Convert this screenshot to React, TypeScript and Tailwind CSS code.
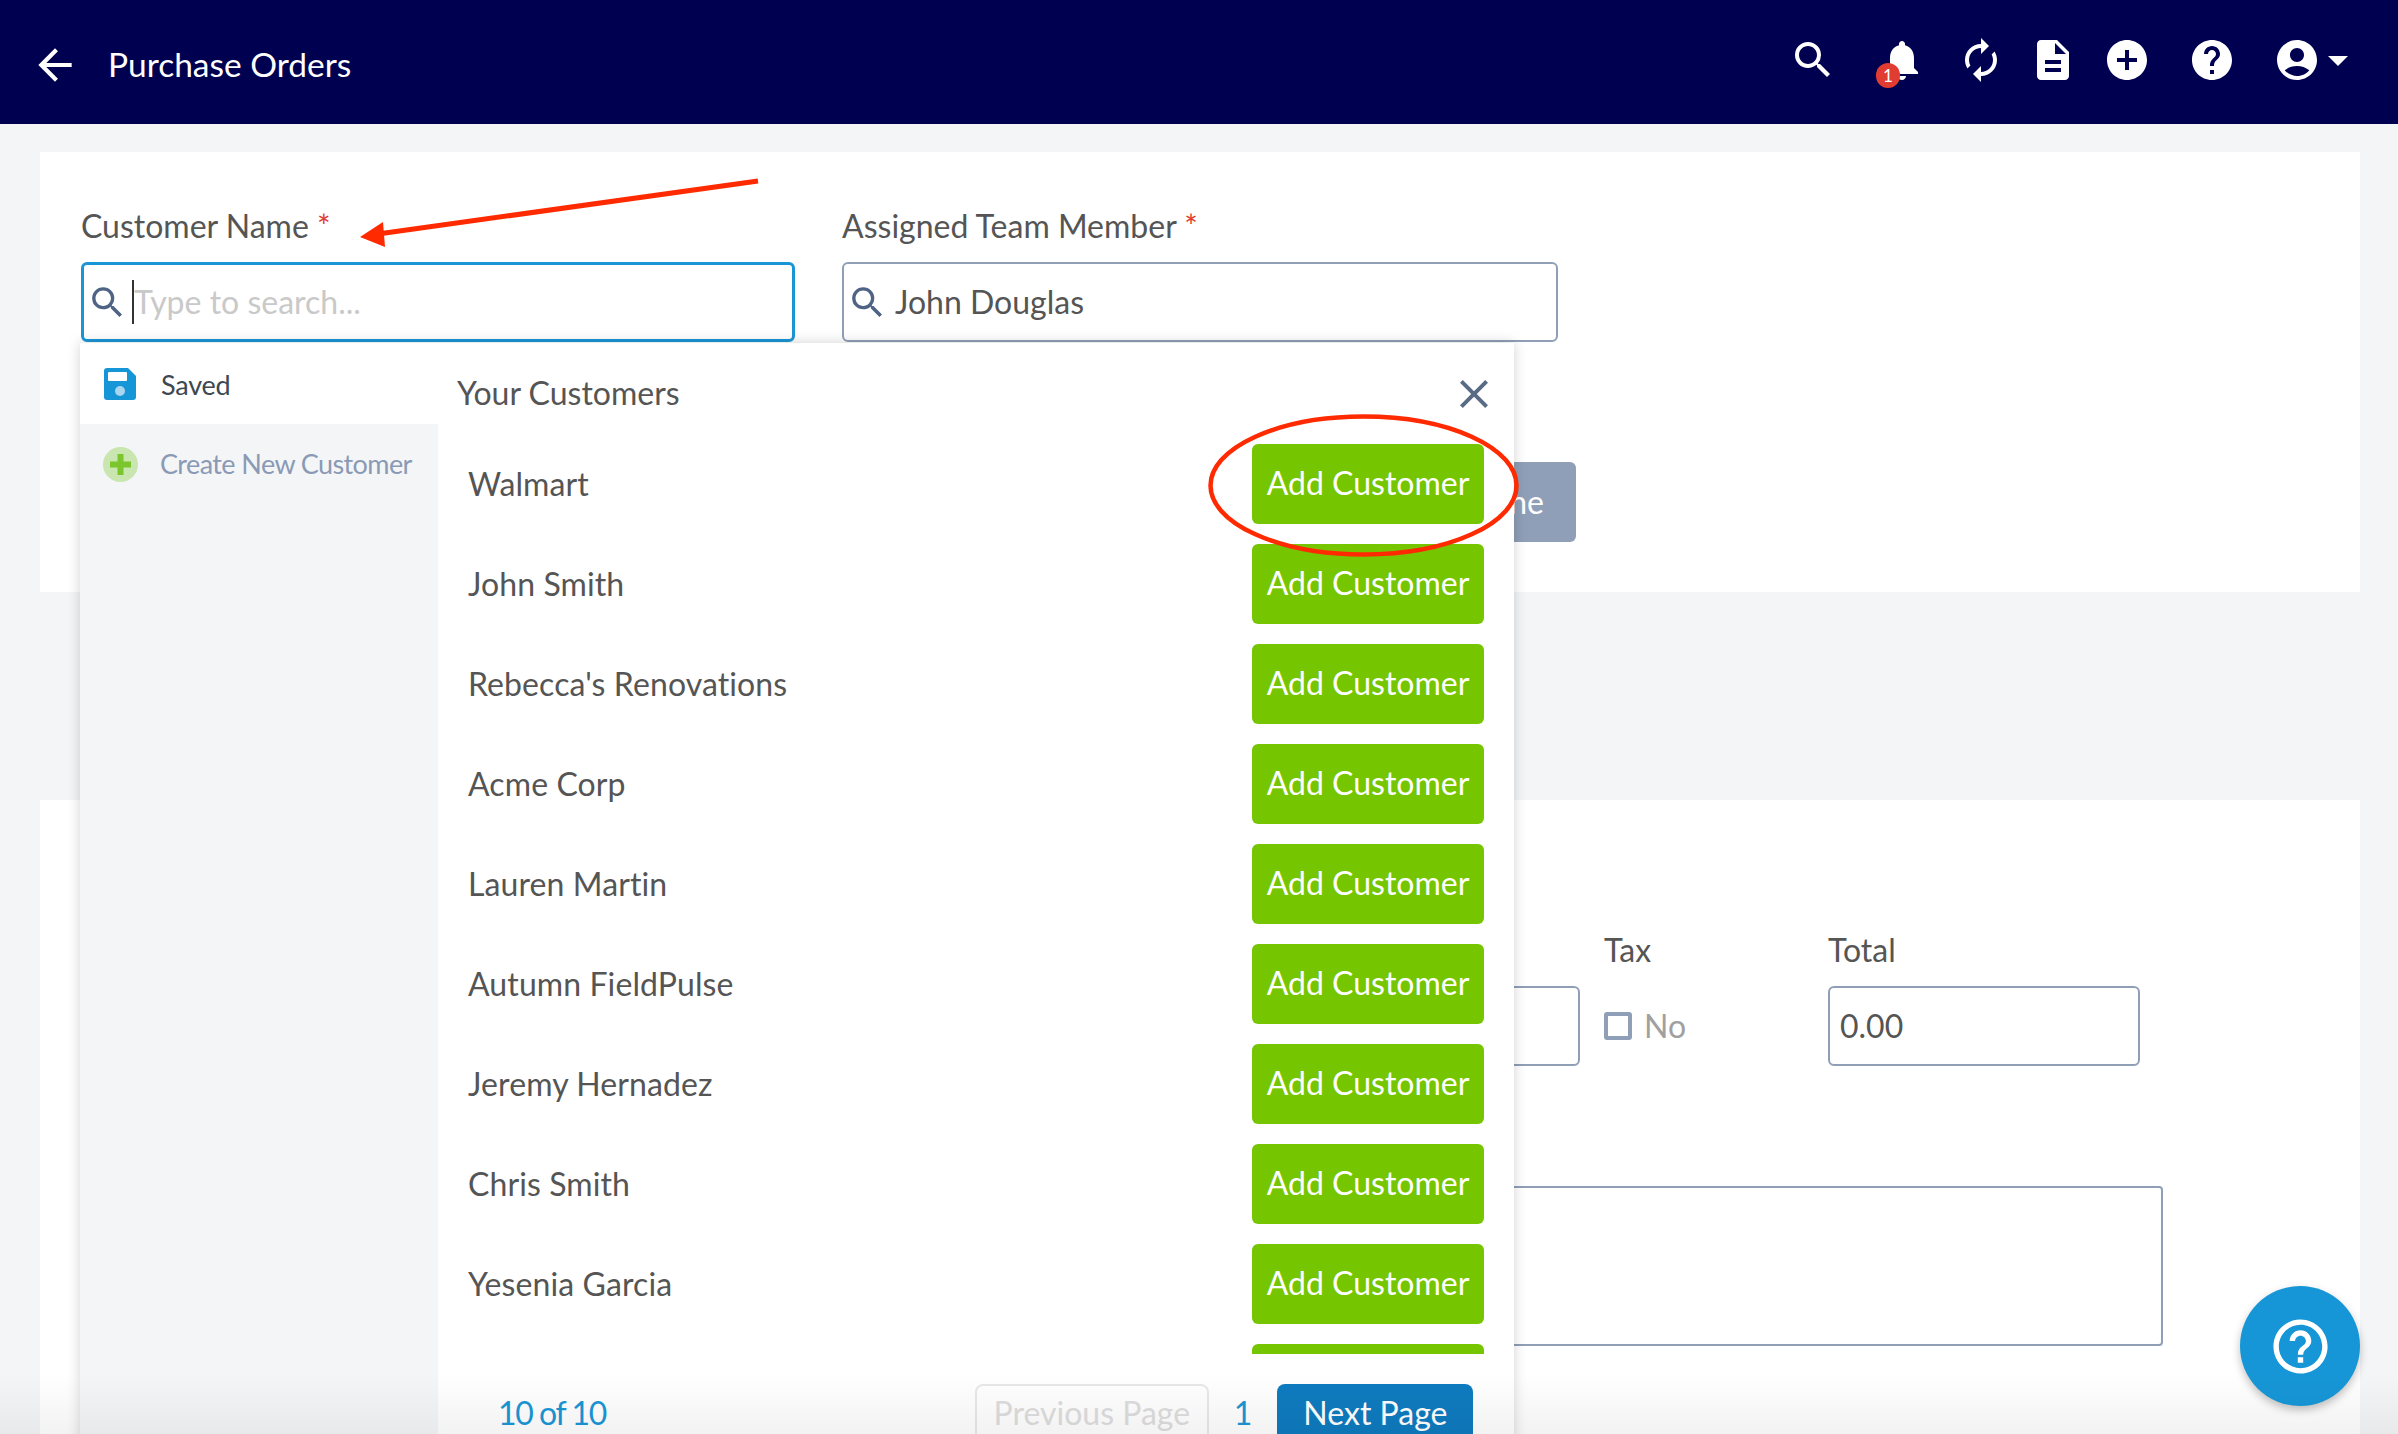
import {
  MdAccountCircle,
  MdAddCircle,
  MdArrowBack,
  MdArrowDropDown,
  MdAutorenew,
  MdClose,
  MdDescription,
  MdHelp,
  MdHelpOutline,
  MdNotifications,
  MdSearch,
} from "react-icons/md";

const customers = [
  "Walmart",
  "John Smith",
  "Rebecca's Renovations",
  "Acme Corp",
  "Lauren Martin",
  "Autumn FieldPulse",
  "Jeremy Hernadez",
  "Chris Smith",
  "Yesenia Garcia",
];

function Header() {
  return (
    <header className="h-[124px] shrink-0 bg-[#000050] text-white flex items-center pl-[30px]">
      <MdArrowBack size={50} className="mt-[6px]" />
      <h1 className="ml-[28px] mt-[6px] text-[33.5px] leading-none">Purchase Orders</h1>
      <div className="ml-auto flex items-center h-full pb-[5px] pr-[36px]">
        <MdSearch size={48} />
        <div className="relative ml-[41px]">
          <MdNotifications size={48} />
          <span className="absolute left-[-2px] top-[27px] w-[24px] h-[25px] rounded-full bg-[#e03c31] text-[17px] leading-[25px] text-center">1</span>
        </div>
        <MdAutorenew size={48} className="ml-[31px]" />
        <MdDescription size={48} className="ml-[24px]" />
        <MdAddCircle size={48} className="ml-[26px]" />
        <MdHelp size={48} className="ml-[37px]" />
        <MdAccountCircle size={48} className="ml-[37px]" />
        <MdArrowDropDown size={48} className="ml-[-7px]" />
      </div>
    </header>
  );
}

function Required({ label }: { label: string }) {
  return (
    <label className="block h-[40px] text-[32px] leading-[40px] text-[#555555]">
      {label} <span className="text-[#e03c31] text-[32px] align-top">*</span>
    </label>
  );
}

function SavedIcon() {
  return (
    <svg width="32" height="32" viewBox="0 0 32 32">
      <path d="M3 0H24L32 8V29a3 3 0 0 1-3 3H3a3 3 0 0 1-3-3V3a3 3 0 0 1 3-3Z" fill="#1696d6" />
      <rect x="4" y="4" width="19" height="9" rx="1" fill="#ffffff" />
      <circle cx="16" cy="23" r="5" fill="#a9d5ef" />
    </svg>
  );
}

function PlusIcon() {
  return (
    <svg width="35" height="35" viewBox="0 0 35 35">
      <circle cx="17.5" cy="17.5" r="17.5" fill="#c9e6b0" />
      <path d="M17.5 7v21M7 17.5h21" stroke="#7bc62d" strokeWidth="6" />
    </svg>
  );
}

function CustomerDropdown() {
  return (
    <div className="absolute left-[40px] top-[191px] w-[1434px] h-[1100px] bg-white flex shadow-[0_0_12px_rgba(0,0,0,0.18)]">
      <aside className="w-[358px] shrink-0 bg-[#f4f5f7]">
        <div className="h-[81px] bg-white flex items-center pl-[24px]">
          <SavedIcon />
          <span className="ml-[25px] mt-[3px] text-[27px] text-[#3d4852] tracking-[-0.2px]">Saved</span>
        </div>
        <div className="h-[81px] flex items-center pl-[23px]">
          <PlusIcon />
          <span className="ml-[22px] text-[27px] text-[#8a9ab5] tracking-[-0.6px]">Create New Customer</span>
        </div>
      </aside>
      <div className="flex-1 min-w-0 relative">
        <div className="h-[99px] flex items-center justify-between pl-[19px] pr-[16px]">
          <h2 className="text-[32px] text-[#555555]">Your Customers</h2>
          <MdClose size={48} className="text-[#5a6b85] mt-[2px]" />
        </div>
        <div className="h-[912px] pt-[2px] overflow-hidden">
          {customers.map((name) => (
            <div key={name} className="h-[100px] flex items-start px-[30px]">
              <span className="mt-[20px] text-[32px] leading-[40px] text-[#555555] tracking-[0.1px]">{name}</span>
              <button className="ml-auto w-[232px] h-[80px] rounded-[6px] bg-[#75c600] text-white text-[32px] pb-[2px]">
                Add Customer
              </button>
            </div>
          ))}
          {/* next row is scrolled out, only the top of its button shows */}
          <div className="px-[30px] flex justify-end">
            <div className="w-[232px] h-[80px] rounded-[6px] bg-[#75c600]" />
          </div>
        </div>
        <div className="h-[80px] mt-[30px] flex items-start pl-[60px] text-[32px] leading-[40px]">
          <span className="mt-[9px] text-[#1a96d6] tracking-[-1.4px]">10 of 10</span>
          <button className="ml-[369px] w-[234px] h-[80px] rounded-[8px] border-2 border-[#e8e8e8] text-[#dddddd] flex justify-center pt-[7px]">
            Previous Page
          </button>
          <span className="ml-[25px] mt-[9px] text-[#1a96d6]">1</span>
          <button className="ml-[25px] w-[196px] h-[80px] rounded-[8px] bg-[#0e7bbf] text-white flex justify-center pt-[9px]">
            Next Page
          </button>
        </div>
      </div>
    </div>
  );
}

function Annotations() {
  return (
    <svg className="absolute z-30 left-0 top-0 pointer-events-none" width="2398" height="1434" viewBox="0 0 2398 1434" fill="none">
      <path d="M758 181 378 234" stroke="#ff2a00" strokeWidth="5" />
      <path d="M360 237 383 222 385 247Z" fill="#ff2a00" />
      <ellipse cx="1363.5" cy="485.5" rx="153" ry="69" stroke="#ff2a00" strokeWidth="4.5" />
    </svg>
  );
}

export default function App() {
  return (
    <div className="relative h-screen overflow-hidden flex flex-col bg-[#f4f5f7] font-['Lato','Noto_Sans',sans-serif]">
      <Header />
      <main className="flex-1 min-h-0 flex flex-col pl-[40px] pr-[38px] pt-[28px]">
        <section className="relative z-10 h-[440px] shrink-0 bg-white pl-[41px] pt-[54px]">
          <div className="flex">
            <div className="w-[714px]">
              <Required label="Customer Name" />
              <div className="mt-[16px] h-[80px] rounded-[6px] border-[3px] border-[#1a96d6] flex items-center pl-[3px]">
                <MdSearch size={41} className="text-[#4f6484]" />
                <span className="ml-[4px] w-[2px] h-[44px] bg-[#333333]" />
                <span className="text-[32px] text-[#c9c9c9]">Type to search...</span>
              </div>
            </div>
            <div className="ml-[47px] w-[716px]">
              <Required label="Assigned Team Member" />
              <div className="mt-[16px] h-[80px] rounded-[6px] border-2 border-[#8f9fb7] flex items-center pl-[3px]">
                <MdSearch size={41} className="text-[#4f6484]" />
                <span className="ml-[7px] text-[32px] text-[#555555]">John Douglas</span>
              </div>
            </div>
          </div>
          <div className="flex justify-end w-[1495px] mt-[120px]">
            <button className="w-[70px] h-[80px] rounded-[6px] bg-[#8f9fb7] text-white text-[32px] text-right pr-[32px]">
              ne
            </button>
          </div>
          <CustomerDropdown />
        </section>
        <section className="mt-[208px] flex-1 bg-white relative pt-[130px]">
          <div className="flex ml-[1260px]">
            <div className="w-[280px] mt-[56px] h-[80px] rounded-[6px] border-2 border-[#8f9fb7]" />
            <div className="ml-[24px] w-[224px]">
              <div className="h-[40px] text-[32px] leading-[40px] text-[#555555]">Tax</div>
              <div className="mt-[16px] h-[80px] flex items-center">
                <span className="w-[28px] h-[28px] rounded-[3px] border-[4px] border-[#8f9fb7]" />
                <span className="ml-[12px] text-[32px] text-[#a0a0a0]">No</span>
              </div>
            </div>
            <div className="w-[312px]">
              <div className="h-[40px] text-[32px] leading-[40px] text-[#555555]">Total</div>
              <div className="mt-[16px] h-[80px] rounded-[6px] border-2 border-[#8f9fb7] flex items-center pl-[10px] text-[32px] text-[#555555]">
                0.00
              </div>
            </div>
          </div>
          <div className="ml-[1300px] w-[823px] h-[160px] mt-[120px] rounded-[4px] border-2 border-[#8f9fb7]" />
          <button className="absolute right-0 bottom-[28px] w-[120px] h-[120px] rounded-full bg-[#1696d6] text-white flex items-center justify-center shadow-[0_4px_8px_rgba(0,0,0,0.25)]">
            <MdHelpOutline size={65} />
          </button>
        </section>
      </main>
      <div className="absolute z-20 left-0 right-0 bottom-0 h-[60px] bg-gradient-to-b from-transparent to-black/5 pointer-events-none" />
      <Annotations />
    </div>
  );
}
